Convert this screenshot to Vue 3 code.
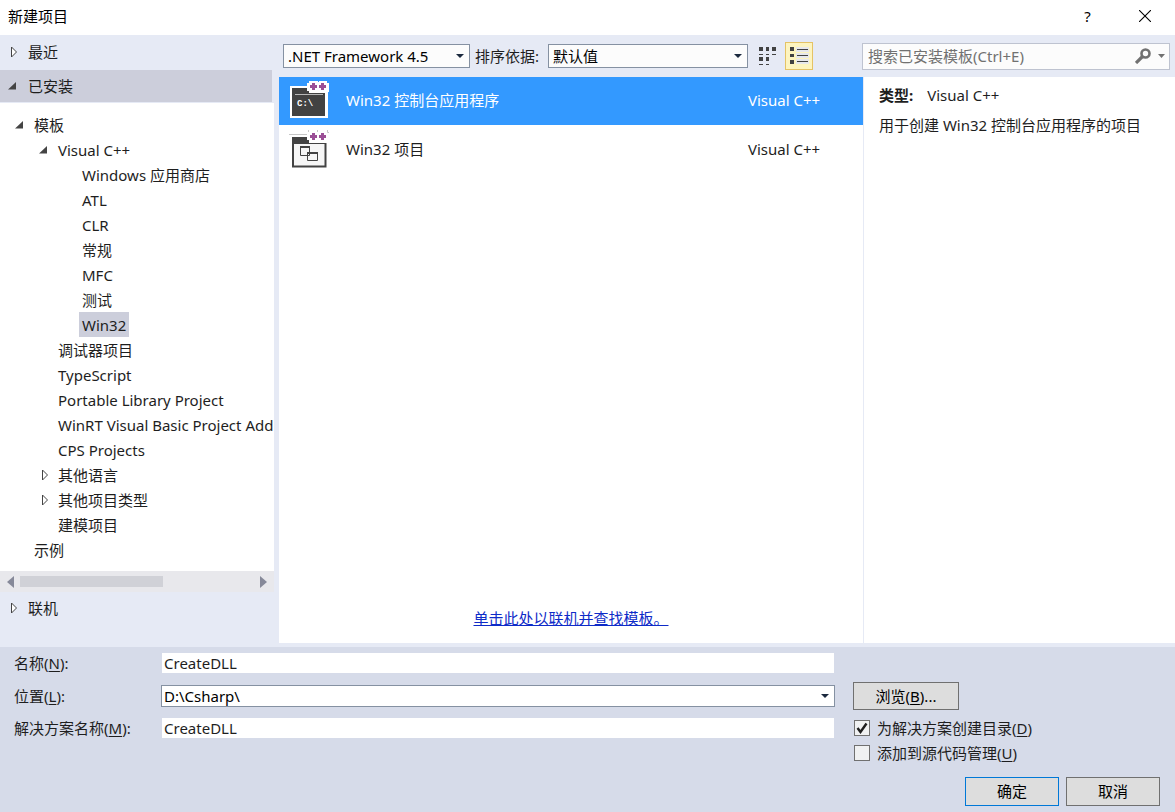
<script setup>
import { ref } from 'vue'

const tree = [
  { text: '模板', level: 0, state: 'open' },
  { text: 'Visual C++', level: 1, state: 'open' },
  { text: 'Windows 应用商店', level: 2 },
  { text: 'ATL', level: 2 },
  { text: 'CLR', level: 2 },
  { text: '常规', level: 2 },
  { text: 'MFC', level: 2 },
  { text: '测试', level: 2 },
  { text: 'Win32', level: 2, selected: true },
  { text: '调试器项目', level: 1 },
  { text: 'TypeScript', level: 1 },
  { text: 'Portable Library Project', level: 1 },
  { text: 'WinRT Visual Basic Project Add', level: 1 },
  { text: 'CPS Projects', level: 1 },
  { text: '其他语言', level: 1, state: 'closed' },
  { text: '其他项目类型', level: 1, state: 'closed' },
  { text: '建模项目', level: 1 },
  { text: '示例', level: 0 },
]

const templates = [
  { id: 'console', text: 'Win32 控制台应用程序', lang: 'Visual C++' },
  { id: 'project', text: 'Win32 项目', lang: 'Visual C++' },
]
const current = ref('console')
const name = ref('CreateDLL')
const solution = ref('CreateDLL')
const search = ref('')
const makeDir = ref(true)
const addSource = ref(false)
</script>

<template>
  <div class="dialog">
    <header class="titlebar">
      <h1>新建项目</h1>
      <button type="button" class="sys" aria-label="帮助"><span>?</span></button>
      <button type="button" class="sys" aria-label="关闭">
        <svg width="12" height="12" viewBox="0 0 12 12"><path d="M0 0L12 12M12 0L0 12" stroke="#000" stroke-width="1.1" /></svg>
      </button>
    </header>

    <div class="main">
      <nav class="side">
        <button type="button" class="section recent">
          <svg class="tri" width="10" height="12" viewBox="0 0 10 12"><path d="M2.5 1V11L7.5 6Z" fill="#fff" stroke="#444" /></svg>最近
        </button>
        <button type="button" class="section installed">
          <svg class="tri" width="10" height="12" viewBox="0 0 10 12"><path d="M9 2V9.500H1Z" fill="#444" /></svg>已安装
        </button>
        <div class="treebox">
          <ul class="tree">
            <li v-for="n in tree" :key="n.text" :class="'lv' + n.level">
              <span class="exp">
                <svg v-if="n.state === 'open'" width="10" height="12" viewBox="0 0 10 12"><path d="M9 2V9.500H1Z" fill="#444" /></svg>
                <svg v-else-if="n.state === 'closed'" width="10" height="12" viewBox="0 0 10 12"><path d="M4.500 1V11L9.500 6Z" fill="#fff" stroke="#444" /></svg>
              </span>
              <button type="button" class="node" :class="{ on: n.selected }">{{ n.text }}</button>
            </li>
          </ul>
        </div>
        <div class="hscroll">
          <button type="button" aria-label="向左滚动"><svg width="7" height="12" viewBox="0 0 7 12"><path d="M7 0V12L0 6Z" fill="#868999" /></svg></button>
          <div class="track"><div class="thumb"></div></div>
          <button type="button" aria-label="向右滚动"><svg width="7" height="12" viewBox="0 0 7 12"><path d="M0 0V12L7 6Z" fill="#868999" /></svg></button>
        </div>
        <button type="button" class="section online">
          <svg class="tri" width="10" height="12" viewBox="0 0 10 12"><path d="M2.500 1V11L7.500 6Z" fill="#fff" stroke="#444" /></svg>联机
        </button>
      </nav>

      <div class="content">
        <div class="toolbar">
          <div class="combo fw">
            <select aria-label="框架"><option>.NET Framework 4.5</option></select>
            <svg class="caret" width="8" height="4" viewBox="0 0 8 4"><path d="M0 0H8L4 4Z" fill="#1b293e" /></svg>
          </div>
          <label for="sort">排序依据:</label>
          <div class="combo sort">
            <select id="sort"><option>默认值</option></select>
            <svg class="caret" width="8" height="4" viewBox="0 0 8 4"><path d="M0 0H8L4 4Z" fill="#1b293e" /></svg>
          </div>
          <button type="button" class="view" aria-label="小图标">
            <svg width="18" height="18" viewBox="0 0 18 18" fill="#424242" shape-rendering="crispEdges">
              <path d="M0 0h4v4H0zM7 0h3v4H7zM13 0h4v4h-4zM0 7h4v1H0zM7 7h3v1H7zM13 7h4v1h-4zM0 10h4v4H0zM7 10h3v4H7zM0 17h4v1H0zM7 17h3v1H7z" />
            </svg>
          </button>
          <button type="button" class="view active" aria-label="中等图标">
            <svg width="19" height="18" viewBox="0 0 19 18" shape-rendering="crispEdges">
              <path d="M6 0h13v5H6zM6 6h13v5H6zM6 12h13v5H6z" fill="#e7e8ec" />
              <path d="M0 0h4v4H0zM0 7h4v3H0zM0 13h4v4H0zM7 2h11v1H7zM7 8h11v1H7zM7 14h11v1H7z" fill="#424242" />
            </svg>
          </button>
          <div class="search">
            <input v-model="search" type="text" aria-label="搜索" placeholder="搜索已安装模板(Ctrl+E)" />
            <svg width="16" height="16" viewBox="0 0 16 16" fill="none" stroke="#717171"><circle cx="10.500" cy="5.500" r="4" stroke-width="2.600" /><path d="M7.500 8.500L1 15" stroke-width="3.200" /></svg>
            <svg class="more" width="7" height="4" viewBox="0 0 7 4"><path d="M0 0H7L3.500 4Z" fill="#717171" /></svg>
          </div>
        </div>

        <div class="panes">
          <section class="list">
            <button v-for="t in templates" :key="t.id" type="button" class="item" :class="{ on: t.id === current }" @click="current = t.id">
              <svg v-if="t.id === 'console'" width="40" height="40" viewBox="0 0 40 40">
                <path d="M1 6H18V3H20V1H29V2H30V1H38V3H40V12H39V38H1Z" fill="#fff" />
                <path d="M3 8H18V11H20V13H36V36H3Z" fill="#424242" />
                <path d="M6 14.500H34" stroke="#b8b8b8" />
                <text x="8" y="26" class="prompt">C:\</text>
                <path d="M23 3h3v2h2v3h-2v2h-3v-2h-2v-3h2zM32 3h3v2h2v3h-2v2h-3v-2h-2v-3h2z" fill="#9b4f96" />
              </svg>
              <svg v-else width="40" height="40" viewBox="0 0 40 40">
                <path d="M0 5.500H18M19.500 1v2M28.500 1v2M38.500 1v2.500h1.500" fill="none" stroke="#c6c6c6" />
                <path d="M3 8H18V11H20V14H37.500V38.500H3Z" fill="#424242" />
                <path d="M5 15H35.500V36.500H5Z" fill="#f6f6f6" />
                <path d="M11.500 17.500H20.500V26.500H11.500ZM18.500 23.500H28.500V31.500H18.500Z" fill="#f6f6f6" stroke="#424242" />
                <path d="M11 18H21M18 24H29" stroke="#424242" stroke-width="2" />
                <path d="M23 4h3v2h2v3h-2v2h-3v-2h-2v-3h2zM32 4h3v2h2v3h-2v2h-3v-2h-2v-3h2z" fill="#9b4f96" />
              </svg>
              <span class="label">{{ t.text }}</span>
              <span class="lang">{{ t.lang }}</span>
            </button>
            <a href="#" class="online-link">单击此处以联机并查找模板。</a>
          </section>
          <aside class="info">
            <p><b>类型:</b><span>Visual C++</span></p>
            <p>用于创建 Win32 控制台应用程序的项目</p>
          </aside>
        </div>
      </div>
    </div>

    <form class="bottom" @submit.prevent>
      <div class="fields">
        <label for="name">名称(<u>N</u>):</label>
        <input id="name" v-model="name" type="text" />
        <span></span>

        <label for="loc">位置(<u>L</u>):</label>
        <div class="combo loc">
          <select id="loc"><option>D:\Csharp\</option></select>
          <svg class="caret" width="8" height="4" viewBox="0 0 8 4"><path d="M0 0H8L4 4Z" fill="#1b293e" /></svg>
        </div>
        <button type="button" class="btn browse">浏览(<u>B</u>)...</button>

        <label for="sol">解决方案名称(<u>M</u>):</label>
        <input id="sol" v-model="solution" type="text" />
        <label class="check"><span class="box"><input v-model="makeDir" type="checkbox" /><svg v-if="makeDir" width="12" height="12" viewBox="0 0 12 12"><path d="M1.500 6L4.500 10L10.500 1.500" fill="none" stroke="#1e1e1e" stroke-width="2.400" /></svg></span><span>为解决方案创建目录(<u>D</u>)</span></label>

        <label class="check second"><span class="box"><input v-model="addSource" type="checkbox" /></span><span>添加到源代码管理(<u>U</u>)</span></label>
      </div>
      <div class="actions">
        <button type="submit" class="btn primary">确定</button>
        <button type="button" class="btn">取消</button>
      </div>
    </form>
  </div>
</template>

<style>
body {
  margin: 0;
}
</style>

<style scoped>
.dialog {
  min-height: 100vh;
  display: flex;
  flex-direction: column;
  background: #e6eaf5;
  color: #1e1e1e;
  font: 15px/20px "Noto Sans", "Noto Sans CJK SC", sans-serif;
}
.dialog * {
  box-sizing: border-box;
}
button,
input,
select {
  font: inherit;
  color: inherit;
  margin: 0;
  padding: 0;
  border: 0;
  border-radius: 0;
  background: none;
}
svg {
  display: block;
  flex: none;
}
u {
  text-underline-offset: 2px;
}
.titlebar {
  height: 35px;
  display: flex;
  align-items: center;
  background: #fff;
  color: #000;
  padding: 0 2px 3px 8px;
}
h1 {
  flex: 1;
  margin: 0;
  font-size: 15px;
  font-weight: 400;
}
.sys {
  width: 57px;
  height: 32px;
  display: flex;
  align-items: center;
  justify-content: center;
}
.main {
  flex: 1;
  display: flex;
  padding-bottom: 4px;
}
.side {
  width: 279px;
  flex: none;
  padding-right: 5px;
}
.section {
  display: flex;
  align-items: center;
  width: 100%;
  height: 32px;
  padding-left: 9px;
  text-align: left;
}
.tri {
  margin-right: 9px;
}
.recent {
  height: 35px;
  padding-bottom: 2px;
}
.installed {
  width: calc(100% - 2px);
  background: #cccedb;
  padding-left: 7px;
}
.installed .tri {
  margin-right: 11px;
}
.treebox {
  background: #fff;
  margin-top: 1px;
  padding: 9px 0;
  overflow: hidden;
}
.tree {
  list-style: none;
  margin: 0;
  padding: 0;
}
.tree li {
  display: flex;
  align-items: center;
  height: 25px;
}
.lv0 {
  padding-left: 14px;
}
.lv1 {
  padding-left: 38px;
}
.lv2 {
  padding-left: 62px;
}
.exp {
  width: 17px;
  flex: none;
}
.node {
  height: 25px;
  padding: 0 3px;
  white-space: nowrap;
}
.node.on {
  background: #cccedb;
}
.hscroll {
  height: 21px;
  display: flex;
  align-items: center;
  background: #e8e8ec;
  padding: 0 7px;
}
.track {
  flex: 1;
  margin: 0 6px;
}
.thumb {
  width: 61%;
  height: 11px;
  background: #d0d1d7;
}
.content {
  flex: 1;
  min-width: 0;
  display: flex;
  flex-direction: column;
}
.toolbar {
  height: 42px;
  display: flex;
  align-items: center;
  padding: 0 5px 0 4px;
}
.combo {
  position: relative;
  color: #000;
}
.combo select {
  display: block;
  width: 100%;
  height: 24px;
  appearance: none;
  background: #fcfcfc;
  border: 1px solid #8591a2;
  padding-left: 4px;
}
.caret {
  position: absolute;
  right: 6px;
  top: 50%;
  margin-top: -2px;
  pointer-events: none;
}
.fw {
  width: 187px;
  margin-right: 5px;
}
.sort {
  width: 200px;
  margin-right: 6px;
}
.toolbar label {
  width: 73px;
}
.view {
  width: 28px;
  height: 28px;
  display: flex;
  align-items: center;
  justify-content: center;
}
.view.active {
  background: #fdf4bf;
  border: 1px solid #e5c365;
  margin-left: 3px;
}
.search {
  margin-left: auto;
  width: 308px;
  height: 27px;
  display: flex;
  align-items: center;
  background: #fcfcfc;
  border: 1px solid #bec3d0;
  padding: 0 4px 0 5px;
}
.search input {
  flex: 1;
  min-width: 0;
}
.search input::placeholder {
  color: #717171;
  opacity: 1;
}
.more {
  margin-left: 7px;
}
.panes {
  flex: 1;
  display: flex;
}
.list {
  flex: 1;
  background: #fff;
  display: flex;
  flex-direction: column;
  gap: 1px;
}
.item {
  height: 48px;
  display: flex;
  align-items: center;
  padding: 0 38px 2px 10px;
  text-align: left;
}
.item.on {
  background: #3399ff;
  color: #fff;
}
.label {
  flex: 1;
  margin-left: 17px;
}
.lang {
  width: 77px;
}
.prompt {
  font: bold 9px "Liberation Mono", monospace;
  fill: #fff;
}
.online-link {
  margin: auto auto 15px;
  color: #0e2bc8;
}
.info {
  width: 312px;
  background: #fff;
  border-left: 1px solid #e6eaf5;
  padding: 8px 15px;
}
.info p {
  margin: 0 0 10px;
}
.info b {
  margin-right: 14px;
}
.bottom {
  background: #d6dbe9;
  padding: 0 15px 6px 14px;
}
.fields {
  display: grid;
  grid-template-columns: 147px minmax(0, 1fr) 325px;
  grid-template-rows: 32px 33px 32px 17px;
  align-items: center;
}
.fields > input {
  height: 20px;
  margin: 0 1px;
  padding: 0 2px;
  background: #fff;
}
.loc select {
  height: 22px;
  padding-left: 2px;
  background: #fff;
}
.btn {
  width: 94px;
  height: 29px;
  padding-bottom: 2px;
  background: #ddd;
  border: 1px solid #707070;
  color: #000;
}
.browse {
  width: 106px;
  height: 28px;
  padding-bottom: 0;
  margin-left: 18px;
}
.check {
  display: flex;
  align-items: center;
  margin-left: 19px;
  gap: 7px;
}
.second {
  grid-column: 3;
}
.box {
  position: relative;
  width: 16px;
  height: 16px;
}
.box input {
  display: block;
  appearance: none;
  width: 16px;
  height: 16px;
  background: #f0f1f2;
  border: 1px solid #707070;
}
.box svg {
  position: absolute;
  left: 2px;
  top: 2px;
  pointer-events: none;
}
.actions {
  display: flex;
  justify-content: flex-end;
  gap: 7px;
  margin-top: 16px;
}
.primary {
  border-color: #0078d7;
}
</style>
